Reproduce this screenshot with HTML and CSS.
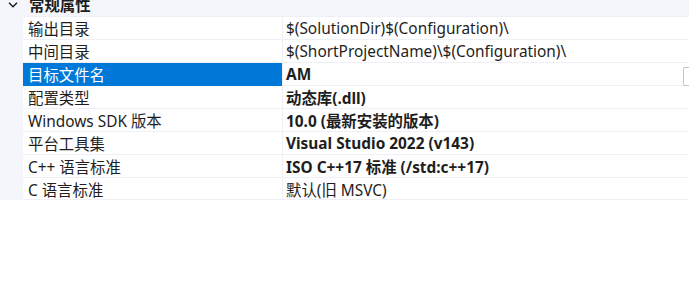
FILE: index.html
```html
<!DOCTYPE html>
<html lang="zh-CN">
<head>
  <meta charset="UTF-8">
  <title>属性页</title>
  <link rel="stylesheet" href="styles.css">
</head>
<body>
  <div class="prop-grid">
    <div class="group-row">
      <span class="chevron">
        <svg width="10" height="6" viewBox="0 0 10 6"><path d="M1 0.8 L5 4.8 L9 0.8" fill="none" stroke="#1e1e1e" stroke-width="1.5"/></svg>
      </span>
      <span class="group-title">常规属性</span>
    </div>
    <div class="prop-list">
      <div class="prop-row">
        <div class="prop-name">输出目录</div>
        <div class="prop-value">$(SolutionDir)$(Configuration)\</div>
      </div>
      <div class="prop-row">
        <div class="prop-name">中间目录</div>
        <div class="prop-value">$(ShortProjectName)\$(Configuration)\</div>
      </div>
      <div class="prop-row selected">
        <div class="prop-name">目标文件名</div>
        <div class="prop-value bold">AM<span class="edit-box"></span></div>
      </div>
      <div class="prop-row">
        <div class="prop-name">配置类型</div>
        <div class="prop-value bold">动态库(.dll)</div>
      </div>
      <div class="prop-row">
        <div class="prop-name">Windows SDK 版本</div>
        <div class="prop-value bold">10.0 (最新安装的版本)</div>
      </div>
      <div class="prop-row">
        <div class="prop-name">平台工具集</div>
        <div class="prop-value bold">Visual Studio 2022 (v143)</div>
      </div>
      <div class="prop-row">
        <div class="prop-name">C++ 语言标准</div>
        <div class="prop-value bold">ISO C++17 标准 (/std:c++17)</div>
      </div>
      <div class="prop-row">
        <div class="prop-name">C 语言标准</div>
        <div class="prop-value">默认(旧 MSVC)</div>
      </div>
    </div>
  </div>
</body>
</html>
```

FILE: styles.css
```css
body {
  margin: 0;
  padding: 0;
  background-color: #ffffff;
  color: #1e1e1e;
  font-family: "Noto Sans", "Noto Sans CJK SC", sans-serif;
  font-size: 15.4px;
  overflow: hidden;
}
.prop-grid {
  margin-top: -8px;
}
.group-row {
  display: flex;
  align-items: center;
  height: 24px;
  background-color: #f4f6fb;
}
.chevron {
  width: 23px;
  display: flex;
  justify-content: center;
  padding-left: 1px;
  padding-top: 2px;
}
.group-title {
  font-weight: bold;
  padding-left: 5px;
}
.prop-list {
  background-color: #f4f6fb;
  padding-left: 23px;
}
.prop-row {
  display: grid;
  grid-template-columns: 259px 1fr;
  height: 23px;
  background-color: #ffffff;
  border-top: 1px solid #eef0f6;
  box-sizing: border-box;
}
.prop-row:last-child {
  border-bottom: 1px solid #eef0f6;
}
.prop-name,
.prop-value {
  display: flex;
  align-items: center;
  white-space: nowrap;
  padding-left: 5px;
}
.prop-value {
  position: relative;
  border-left: 1px solid #eef0f6;
  padding-left: 3px;
}
.bold {
  font-weight: bold;
}
.selected .prop-name {
  background-color: #0078d7;
  color: #ffffff;
}
.edit-box {
  position: absolute;
  left: 400px;
  top: 4px;
  width: 20px;
  height: 17px;
  border: 1px solid #c4c4c4;
  border-right: none;
  border-radius: 2px 0 0 2px;
}
```
